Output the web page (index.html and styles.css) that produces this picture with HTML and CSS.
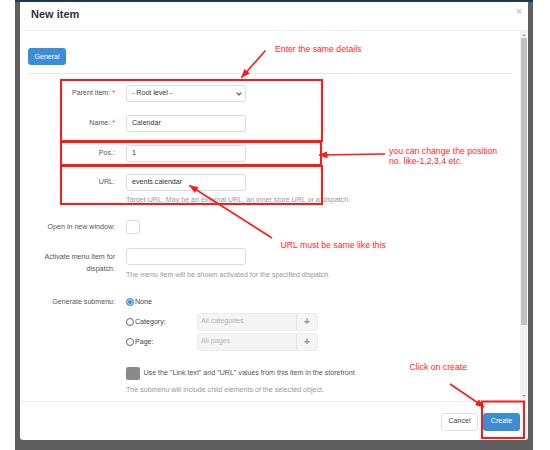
FILE: index.html
```html
<!DOCTYPE html>
<html>
<head>
<meta charset="utf-8">
<link rel="stylesheet" href="styles.css">
</head>
<body>
<div class="screen">
  <div class="gutter"></div>
  <div class="backdrop">
    <div class="modal">
      <div class="modal-header">
        <h3 class="title">New item</h3>
        <span class="close">×</span>
      </div>
      <div class="modal-main">
        <div class="modal-body">
          <div class="tabs"><span class="tab-btn">General</span></div>
          <div class="tabs-line"></div>
          <div class="form">
            <div class="row r1">
              <div class="label">Parent item:<span class="req">*</span></div>
              <div class="control">
                <div class="input select"><span>- Root level -</span>
                  <svg class="chev" width="6" height="4" viewBox="0 0 6 4"><path d="M0.6 0.6 L3 3 L5.4 0.6" fill="none" stroke="#555" stroke-width="1.1"/></svg>
                </div>
              </div>
            </div>
            <div class="row r2">
              <div class="label">Name:<span class="req">*</span></div>
              <div class="control"><div class="input">Calendar</div></div>
            </div>
            <div class="row r3">
              <div class="label">Pos.:</div>
              <div class="control"><div class="input">1</div></div>
            </div>
            <div class="row r4">
              <div class="label">URL:</div>
              <div class="control">
                <div class="input">events.calendar</div>
                <p class="help">Target URL. May be an external URL, an inner store URL or a dispatch.</p>
              </div>
            </div>
            <div class="row r5">
              <div class="label lh14">Open in new window:</div>
              <div class="control"><div class="checkbox"></div></div>
            </div>
            <div class="row r6">
              <div class="label two">Activate menu item for<br>dispatch:</div>
              <div class="control">
                <div class="input"></div>
                <p class="help h2">The menu item will be shown activated for the specified dispatch.</p>
              </div>
            </div>
            <div class="row r7">
              <div class="label lh12">Generate submenu:</div>
              <div class="control">
                <div class="radio-line"><span class="radio checked"></span>None</div>
                <div class="radio-row cat">
                  <div class="radio-label"><span class="radio"></span>Category:</div>
                  <div class="input-group"><span class="ig-text">All categories</span><span class="ig-btn">+</span></div>
                </div>
                <div class="radio-row page">
                  <div class="radio-label"><span class="radio"></span>Page:</div>
                  <div class="input-group"><span class="ig-text">All pages</span><span class="ig-btn">+</span></div>
                </div>
                <div class="use-line"><span class="gray-box"></span>Use the "Link text" and "URL" values from this item in the storefront</div>
                <p class="help h3">The submenu will include child elements of the selected object.</p>
              </div>
            </div>
          </div>
        </div>
        <div class="scrollbar">
          <span class="arr up"></span>
          <span class="thumb"></span>
          <span class="arr down"></span>
        </div>
      </div>
      <div class="modal-footer">
        <span class="btn cancel">Cancel</span>
        <span class="btn create">Create</span>
      </div>
    </div>
  </div>
</div>

<svg class="annot" width="550" height="450" viewBox="0 0 550 450">
  <defs>
    <marker id="ah" markerUnits="userSpaceOnUse" markerWidth="9" markerHeight="7" refX="8.5" refY="3.5" orient="auto">
      <path d="M0,0 L9,3.5 L0,7 z" fill="#ff1a1a"/>
    </marker>
  </defs>
  <g fill="none" stroke="#ff1a1a" stroke-width="2">
    <rect x="61" y="80" width="261" height="61"/>
    <rect x="61" y="142" width="260" height="23"/>
    <rect x="61" y="166" width="261" height="38"/>
    <rect x="482" y="401.5" width="42" height="36.5"/>
  </g>
  <g stroke="#ff1a1a" stroke-width="1.6" fill="none">
    <line x1="265.5" y1="50.5" x2="241.5" y2="77.5" marker-end="url(#ah)"/>
    <line x1="385" y1="154" x2="319" y2="155" marker-end="url(#ah)"/>
    <line x1="272" y1="238" x2="189.5" y2="185.5" marker-end="url(#ah)"/>
    <line x1="450" y1="384" x2="484" y2="407" marker-end="url(#ah)"/>
  </g>
</svg>
<div class="note n1">Enter the same details</div>
<div class="note n2">you can change the position<br>no. like-1,2,3,4 etc.</div>
<div class="note n3">URL must be same like this</div>
<div class="note n4">Click on create</div>
</body>
</html>
```
FILE: styles.css
```css
* { box-sizing: border-box; margin: 0; padding: 0; }
html, body { width: 550px; height: 450px; }
body {
  background: #fff;
  font-family: "Liberation Sans", Arial, sans-serif;
  position: relative;
  overflow: hidden;
}
.screen { display: flex; height: 450px; }
.gutter { width: 15px; flex-shrink: 0; }
.backdrop {
  width: 518px;
  height: 450px;
  background: #5f5f5f;
  border-top: 2px solid #1c3553;
  padding-left: 5px;
  flex-shrink: 0;
}
.modal {
  width: 508px;
  height: 438px;
  background: #fff;
  border-radius: 0 0 3px 3px;
  display: flex;
  flex-direction: column;
}
.modal-header {
  height: 29px;
  border-bottom: 1px solid #f0f0f0;
  display: flex;
  justify-content: space-between;
  align-items: flex-start;
  padding: 5px 6px 0 11px;
  flex-shrink: 0;
}
.title {
  font-size: 11px;
  line-height: 14px;
  font-weight: bold;
  color: #333;
}
.close {
  font-size: 10px;
  line-height: 10px;
  font-weight: bold;
  color: #c8c8c8;
}
.modal-main {
  height: 370px;
  display: flex;
  flex-shrink: 0;
}
.modal-body {
  width: 500px;
  padding: 17px 8px 0 8px;
  overflow: hidden;
  flex-shrink: 0;
}
.tabs { display: flex; }
.tab-btn {
  display: block;
  width: 38px;
  height: 17px;
  line-height: 17px;
  text-align: center;
  background: #3c8dd6;
  color: #fff;
  font-size: 7px;
  border-radius: 3px;
}
.tabs-line {
  margin-top: 8px;
  border-bottom: 1px solid #e8e8e8;
}
.form { padding-top: 11px; }
.row { display: flex; align-items: flex-start; }
.r2, .r3 { margin-top: 13px; }
.r4 { margin-top: 12px; }
.r5 { margin-top: 15px; }
.r6 { margin-top: 14px; }
.r7 { margin-top: 16px; }
.label {
  width: 87px;
  flex-shrink: 0;
  text-align: right;
  font-size: 7.1px;
  line-height: 17px;
  color: #555;
}
.label.lh14 { line-height: 14px; }
.label.lh12 { line-height: 12px; }
.label.two { line-height: 12px; padding-top: 3px; }
.req { color: #e03030; margin-left: 2px; }
.control { margin-left: 11px; }
.input {
  width: 120px;
  height: 17px;
  border: 1px solid #dcdcdc;
  border-radius: 3px;
  background: #fff;
  font-size: 7.1px;
  line-height: 15px;
  color: #333;
  padding: 0 5px;
}
.select {
  display: flex;
  justify-content: space-between;
  align-items: center;
  padding-right: 3px;
}
.chev { display: block; }
.help {
  font-size: 7.1px;
  line-height: 10px;
  color: #999;
  margin-top: 4px;
  white-space: nowrap;
}
.help.h2 { margin-top: 4.5px; }
.help.h3 { margin-top: 5px; }
.checkbox {
  width: 13.5px;
  height: 14px;
  border: 1px solid #dcdcdc;
  border-radius: 3px;
}
.radio-line {
  display: flex;
  align-items: center;
  height: 12px;
  font-size: 7.1px;
  color: #444;
}
.radio {
  width: 8px;
  height: 8px;
  border: 1px solid #666;
  border-radius: 50%;
  margin-right: 1px;
  flex-shrink: 0;
  background: #fff;
}
.radio.checked {
  border-color: #3c8dd6;
  background: #3c8dd6;
  box-shadow: inset 0 0 0 1px #cfe3f6;
}
.radio-row {
  display: flex;
  align-items: center;
  height: 17.5px;
}
.radio-row.cat { margin-top: 5.5px; }
.radio-row.page { margin-top: 2.5px; }
.radio-label {
  width: 71px;
  display: flex;
  align-items: center;
  font-size: 7.1px;
  color: #444;
}
.input-group {
  width: 121px;
  height: 17.5px;
  display: flex;
  background: #f5f5f5;
  border: 1px solid #ededed;
  border-radius: 3px;
}
.ig-text {
  flex: 1;
  font-size: 7.1px;
  line-height: 15.5px;
  color: #b3b3b3;
  padding-left: 3px;
}
.ig-btn {
  width: 21px;
  border-left: 1px solid #e6e6e6;
  display: flex;
  align-items: center;
  justify-content: center;
  font-size: 10px;
  font-weight: bold;
  color: #8a8a8a;
}
.use-line {
  display: flex;
  align-items: center;
  margin-top: 16px;
  font-size: 7.1px;
  color: #555;
  white-space: nowrap;
}
.gray-box {
  width: 13.5px;
  height: 13.5px;
  background: #8a8a8a;
  border-radius: 2px;
  margin-right: 4px;
  flex-shrink: 0;
}
.scrollbar {
  width: 7px;
  background: #f1f1f1;
  display: flex;
  flex-direction: column;
  align-items: center;
  flex-shrink: 0;
}
.arr {
  width: 0;
  height: 0;
  border-left: 2.5px solid transparent;
  border-right: 2.5px solid transparent;
}
.arr.up { border-bottom: 2.5px solid #a0a0a0; margin-top: 2.5px; }
.arr.down { border-top: 2.5px solid #a0a0a0; margin-top: 70px; }
.thumb {
  width: 6px;
  height: 287px;
  background: #c1c1c1;
  margin-top: 2.5px;
}
.modal-footer {
  flex: 1;
  border-top: 1px solid #eeeeee;
  display: flex;
  justify-content: flex-end;
  align-items: flex-start;
  gap: 5px;
  padding: 11px 8px 0 0;
}
.btn {
  display: block;
  width: 37px;
  height: 17.5px;
  line-height: 17.5px;
  text-align: center;
  font-size: 7.1px;
  border-radius: 3px;
}
.cancel {
  border: 1px solid #e2e2e2;
  line-height: 15.5px;
  color: #444;
  background: #fff;
}
.create {
  background: #3c8dd6;
  color: #fff;
}
.annot {
  position: absolute;
  left: 0;
  top: 0;
  pointer-events: none;
}
.note {
  position: absolute;
  font-size: 8.7px;
  line-height: 10px;
  color: #ff1f1f;
  white-space: nowrap;
}
.n1 { left: 275px; top: 44px; }
.n2 { left: 389px; top: 146px; }
.n3 { left: 280.5px; top: 239.5px; }
.n4 { left: 409.5px; top: 361.5px; }
```
